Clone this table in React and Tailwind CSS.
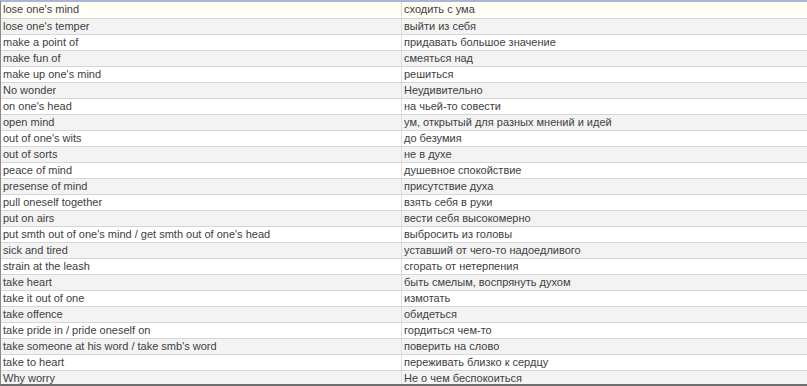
const rows = [
  ["lose one's mind", "сходить с ума"],
  ["lose one's temper", "выйти из себя"],
  ["make a point of", "придавать большое значение"],
  ["make fun of", "смеяться над"],
  ["make up one's mind", "решиться"],
  ["No wonder", "Неудивительно"],
  ["on one's head", "на чьей-то совести"],
  ["open mind", "ум, открытый для разных мнений и идей"],
  ["out of one's wits", "до безумия"],
  ["out of sorts", "не в духе"],
  ["peace of mind", "душевное спокойствие"],
  ["presense of mind", "присутствие духа"],
  ["pull oneself together", "взять себя в руки"],
  ["put on airs", "вести себя высокомерно"],
  ["put smth out of one's mind / get smth out of one's head", "выбросить из головы"],
  ["sick and tired", "уставший от чего-то надоедливого"],
  ["strain at the leash", "сгорать от нетерпения"],
  ["take heart", "быть смелым, воспрянуть духом"],
  ["take it out of one", "измотать"],
  ["take offence", "обидеться"],
  ["take pride in / pride oneself on", "гордиться чем-то"],
  ["take someone at his word / take smb's word", "поверить на слово"],
  ["take to heart", "переживать близко к сердцу"],
  ["Why worry", "Не о чем беспокоиться"],
];

export default function App() {
  return (
    <div className="w-[807px] h-[386px] overflow-hidden bg-white border-t-2 border-t-[#aab4d8] border-b-2 border-b-[#6e6e6e] border-l border-l-[#8a8a8a] font-['Liberation_Sans',Arial,sans-serif] text-[11px] leading-[15px] text-[#404040]">
      {rows.map(([en, ru], i) => (
        <div
          key={i}
          className={`flex ${i === 0 ? "h-4 bg-[#fffff6]" : "h-4 border-t border-[#d6d6d6]"} ${
            i > 0 && i % 2 === 1 ? "bg-[#f3f3f3]" : i > 0 ? "bg-white" : ""
          }`}
        >
          <div className="w-[401px] pl-[2px] border-r border-[#dedede] whitespace-nowrap overflow-hidden">
            {en}
          </div>
          <div className="flex-1 pl-[2px] whitespace-nowrap">{ru}</div>
        </div>
      ))}
    </div>
  );
}
